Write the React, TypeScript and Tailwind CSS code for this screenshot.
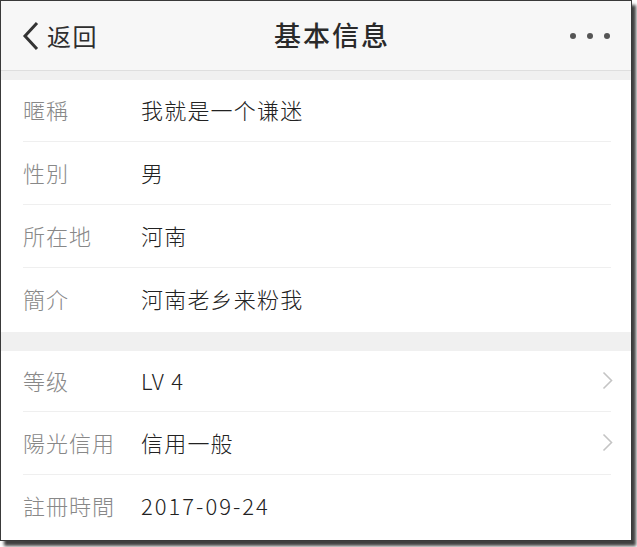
import React from "react";

const font = { fontFamily: '"Noto Sans CJK SC", "Noto Sans", sans-serif' };

function Chevron() {
  return (
    <svg width="11" height="19" viewBox="0 0 11 19" className="shrink-0">
      <path d="M1.5 1.5 L9.5 9.5 L1.5 17.5" fill="none" stroke="#c4c4c4" strokeWidth="1.6" />
    </svg>
  );
}

function Row({
  label,
  value,
  h,
  divider = true,
  arrow = false,
  wide = false,
}: {
  label: string;
  value: string;
  h: string;
  divider?: boolean;
  arrow?: boolean;
  wide?: boolean;
}) {
  return (
    <div className={`relative flex items-center pl-[22px] pr-[18px] pb-[3px] ${h}`}>
      <div className="w-[118px] text-[22px] font-light tracking-[1px] text-[#888]">{label}</div>
      <div
        className={`flex-1 text-[22px] font-light text-[#222] ${wide ? "tracking-[2px]" : "tracking-[1.2px]"}`}
      >
        {value}
      </div>
      {arrow && <Chevron />}
      {divider && <div className="absolute bottom-0 left-[22px] right-[20px] h-px bg-[#efefef]" />}
    </div>
  );
}

export default function App() {
  return (
    <div className="w-[637px] h-[547px] bg-white" style={font}>
      <div className="w-[632px] h-[541px] border border-[#3a3a3a] bg-white shadow-[4px_5px_3px_rgba(0,0,0,0.75)] overflow-hidden">
        {/* nav bar */}
        <div className="h-[70px] bg-[#f7f7f7] border-b border-[#dedede] flex items-center pl-[20px] pr-[21px]">
          <div className="flex items-center">
            <svg width="20" height="30" viewBox="0 0 20 30">
              <path d="M16 2 L4 15 L16 28" fill="none" stroke="#333" strokeWidth="3" />
            </svg>
            <span className="ml-[6px] text-[24px] tracking-[1.5px] text-[#2e2e2e]">返回</span>
          </div>
          <div className="ml-[176px] text-[27px] font-medium tracking-[2px] text-[#2a2a2a]">基本信息</div>
          <div className="flex-1" />
          <div className="flex items-center gap-[11px]">
            <span className="w-[6px] h-[6px] rounded-full bg-[#555]" />
            <span className="w-[6px] h-[6px] rounded-full bg-[#555]" />
            <span className="w-[6px] h-[6px] rounded-full bg-[#555]" />
          </div>
        </div>
        <div className="h-[9px] bg-[#f0f0f0]" />

        <Row label="暱稱" value="我就是一个谦迷" h="h-[62px]" />
        <Row label="性別" value="男" h="h-[63px]" />
        <Row label="所在地" value="河南" h="h-[63px]" />
        <Row label="簡介" value="河南老乡来粉我" h="h-[64px]" divider={false} />

        <div className="h-[19px] bg-[#f0f0f0]" />

        <Row label="等级" value="LV 4" h="h-[61px]" arrow />
        <Row label="陽光信用" value="信用一般" h="h-[63px]" arrow />
        <Row label="註冊時間" value="2017-09-24" h="h-[64px]" divider={false} wide />
      </div>
    </div>
  );
}
